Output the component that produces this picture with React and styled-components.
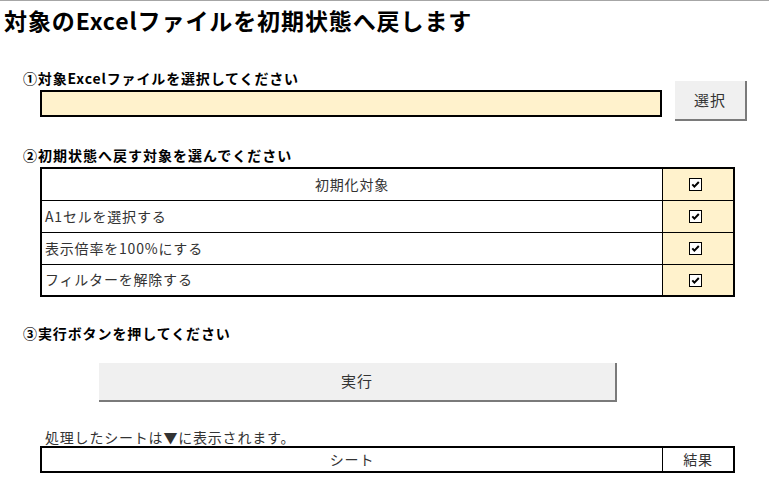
import React from 'react';
import styled, { createGlobalStyle } from 'styled-components';

const Global = createGlobalStyle`
  html, body { margin: 0; padding: 0; background: #fff; }
  body { font-family: "Noto Sans CJK JP", "Noto Sans", sans-serif; color: #333; }
  * { box-sizing: border-box; }
`;

const Page = styled.div`
  width: 769px;
  height: 504px;
  border-top: 1px solid #a6a6a6;
  overflow: hidden;
  display: flex;
  flex-direction: column;
`;

const Title = styled.h1`
  margin: 0;
  height: 40px;
  padding-left: 4px;
  padding-bottom: 2px;
  display: flex;
  align-items: center;
  font-size: 23px;
  font-weight: 700;
  letter-spacing: 0.9px;
  color: #000;
`;

const StepLabel = styled.div`
  height: 20px;
  line-height: 20px;
  margin-top: ${p => p.$mt || 0}px;
  padding-left: 23px;
  font-size: 14px;
  font-weight: 700;
  letter-spacing: ${p => p.$ls || '0.3px'};
  color: #000;
  white-space: nowrap;
`;

const SelectRow = styled.div`
  display: flex;
  align-items: flex-start;
  margin-top: 27px;
`;

const FileColumn = styled.div`
  display: flex;
  flex-direction: column;
`;

const FileInput = styled.div`
  margin-top: 2px;
  margin-left: 40px;
  width: 622px;
  height: 27px;
  border: 2px solid #000;
  background: #fff2cc;
`;

const Button = styled.button`
  width: ${p => p.$w}px;
  height: ${p => p.$h}px;
  padding: 0 0 2px;
  border: none;
  border-right: 2px solid #7a7a7a;
  border-bottom: 2px solid #7a7a7a;
  background: #f0f0f0;
  font-family: inherit;
  font-size: 15px;
  letter-spacing: 1px;
  color: #333;
  flex: none;
`;

const SelectButton = styled(Button)`
  margin-left: 13px;
  margin-top: 13px;
`;

const RunButton = styled(Button)`
  margin-left: 99px;
  margin-top: 20px;
`;

const Table = styled.div`
  margin-left: 40px;
  margin-top: ${p => p.$mt || 0}px;
  width: 695px;
  display: grid;
  grid-template-columns: 620px 70px;
  grid-template-rows: ${p => p.$rows};
  gap: 1px;
  background: #000;
  border: 2px solid #000;
`;

const Cell = styled.div`
  background: ${p => (p.$accent ? '#fff2cc' : '#fff')};
  display: flex;
  align-items: center;
  justify-content: ${p => (p.$center ? 'center' : 'flex-start')};
  padding-left: ${p => (p.$center ? 0 : 3)}px;
  padding-bottom: ${p => (p.$accent ? 0 : 2)}px;
  font-size: 14px;
  letter-spacing: 0.8px;
  color: #333;
  white-space: nowrap;
`;

const Note = styled.div`
  margin-top: 26px;
  height: 18px;
  line-height: 18px;
  padding-left: 45px;
  font-size: 14px;
  letter-spacing: 0.8px;
  color: #333;
`;

const CheckIcon = styled.svg`
  display: block;
  margin-right: 5px;
`;

const CheckBox = () => (
  <CheckIcon width="13" height="13" viewBox="0 0 13 13">
    <rect x="0.5" y="0.5" width="12" height="12" fill="#fff" stroke="#000" />
    <path d="M3.3 6.3 L5.4 8.6 L9.8 4" fill="none" stroke="#000" strokeWidth="2" />
  </CheckIcon>
);

const items = ['A1セルを選択する', '表示倍率を100%にする', 'フィルターを解除する'];

export default function App() {
  return (
    <Page>
      <Global />
      <Title>対象のExcelファイルを初期状態へ戻します</Title>

      <SelectRow>
        <FileColumn>
          <StepLabel $ls="0.85px">①対象Excelファイルを選択してください</StepLabel>
          <FileInput />
        </FileColumn>
        <SelectButton $w={72} $h={40}>選択</SelectButton>
      </SelectRow>

      <StepLabel $mt={24} $ls="1px">②初期状態へ戻す対象を選んでください</StepLabel>
      <Table $mt={2} $rows="31px 31px 31px 30px">
        <Cell $center>初期化対象</Cell>
        <Cell $accent $center><CheckBox /></Cell>
        {items.map(t => (
          <React.Fragment key={t}>
            <Cell>{t}</Cell>
            <Cell $accent $center><CheckBox /></Cell>
          </React.Fragment>
        ))}
      </Table>

      <StepLabel $mt={26} $ls="0.9px">③実行ボタンを押してください</StepLabel>
      <RunButton $w={518} $h={39}>実行</RunButton>

      <Note>処理したシートは▼に表示されます。</Note>
      <Table $rows="23px">
        <Cell $center>シート</Cell>
        <Cell $center>結果</Cell>
      </Table>
    </Page>
  );
}
